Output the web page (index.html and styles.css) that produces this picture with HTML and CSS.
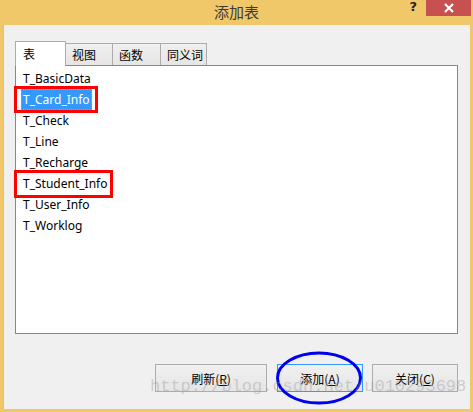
FILE: index.html
```html
<!DOCTYPE html>
<html>
<head>
<meta charset="utf-8">
<link rel="stylesheet" href="styles.css">
</head>
<body>
<div class="window">
  <div class="titlebar">
    <div></div>
    <div class="title">添加表</div>
    <div class="caption-btns">
      <span class="help">?</span>
      <span class="close">
        <svg width="12" height="10" viewBox="0 0 12 10"><path d="M2 1 L10 9 M10 1 L2 9" stroke="#fff" stroke-width="2.2" fill="none"/></svg>
      </span>
    </div>
  </div>
  <div class="client">
    <div class="tabs">
      <div class="tab active">表</div>
      <div class="tab">视图</div>
      <div class="tab">函数</div>
      <div class="tab">同义词</div>
    </div>
    <div class="panel">
      <div class="item"><span class="txt">T_BasicData</span></div>
      <div class="item"><span class="txt sel">T_Card_Info</span><span class="mark m1"></span></div>
      <div class="item"><span class="txt">T_Check</span></div>
      <div class="item"><span class="txt">T_Line</span></div>
      <div class="item"><span class="txt">T_Recharge</span></div>
      <div class="item"><span class="txt">T_Student_Info</span><span class="mark m2"></span></div>
      <div class="item"><span class="txt">T_User_Info</span></div>
      <div class="item"><span class="txt">T_Worklog</span></div>
    </div>
    <div class="buttons">
      <button class="btn wide">刷新(<u>R</u>)</button>
      <button class="btn default">添加(<u>A</u>)<svg class="circle" width="90" height="56" viewBox="0 0 90 56"><ellipse cx="45" cy="28" rx="41.5" ry="25" fill="none" stroke="#0000ee" stroke-width="3"/></svg></button>
      <button class="btn">关闭(<u>C</u>)</button>
    </div>
  </div>
  <div class="watermark">http://blog.csdn.net/u010293698</div>
</div>
</body>
</html>
```
FILE: styles.css
```css
* { box-sizing: border-box; }
html, body { margin: 0; padding: 0; }
body {
  width: 473px;
  height: 412px;
  overflow: hidden;
  font-family: "Noto Sans", "Noto Sans CJK SC", sans-serif;
}
.window {
  position: relative;
  width: 473px;
  height: 412px;
  background: #f0c86a;
  display: flex;
  flex-direction: column;
}
.titlebar {
  height: 25px;
  display: grid;
  grid-template-columns: 1fr auto 1fr;
  align-items: start;
}
.title {
  font-family: "Noto Sans CJK SC", sans-serif;
  font-size: 15px;
  line-height: 24px;
  color: #3a3a3a;
}
.caption-btns {
  display: flex;
  justify-content: flex-end;
  align-items: flex-start;
  padding-right: 2px;
}
.help {
  font-family: "DejaVu Sans", sans-serif;
  font-weight: bold;
  font-size: 13px;
  line-height: 14px;
  color: #222;
  margin-right: 9px;
}
.close {
  width: 45px;
  height: 16px;
  background: #c75050;
  display: flex;
  align-items: center;
  justify-content: center;
}
.close svg { display: block; }
.client {
  flex: 1;
  margin: 0 3px 3px 3px;
  background: #f0f0f0;
  border-left: 1px solid #e2c27a;
  padding: 16px 12px 17px 11px;
  display: flex;
  flex-direction: column;
}
.tabs {
  display: flex;
  align-items: flex-end;
  height: 24px;
  font-family: "Noto Sans CJK SC", sans-serif;
  font-size: 12px;
  position: relative;
  z-index: 1;
}
.tab {
  height: 22px;
  border: 1px solid #acacac;
  border-bottom: none;
  background: linear-gradient(#f0f0f0, #e5e5e5);
  color: #000;
  padding: 2px 0 0 6px;
  line-height: 17px;
  width: 48px;
  margin-left: -1px;
}
.tab:nth-child(3) { width: 49px; }
.tab:nth-child(4) { width: 47px; }
.tab.active {
  height: 25px;
  width: 51px;
  margin-left: 0;
  margin-bottom: -1px;
  background: #fff;
  padding: 3px 0 0 7px;
  z-index: 2;
}
.panel {
  height: 269px;
  background: #fff;
  border: 1px solid #828790;
  padding: 2px 5px;
  display: flex;
  flex-direction: column;
  align-items: flex-start;
}
.item {
  position: relative;
  height: 21px;
  display: flex;
  align-items: center;
}
.txt {
  font-size: 12px;
  line-height: 21px;
  padding: 0 2px;
  color: #000;
}
.txt.sel {
  background: #3399ff;
  color: #fff;
  outline: 1px dotted #c0a060;
  outline-offset: -1px;
}
.mark {
  position: absolute;
  border: 3px solid #ff0000;
}
.m1 { left: -7px; right: -6px; top: -3px; bottom: -3px; }
.m2 { left: -7px; right: -4px; top: -3px; bottom: -4px; }
.buttons {
  margin-top: auto;
  display: flex;
  justify-content: flex-end;
  gap: 9px;
}
.btn {
  position: relative;
  height: 28px;
  width: 86px;
  border: 1px solid #acacac;
  background: linear-gradient(#f0f0f0, #e5e5e5);
  font-family: "Noto Sans CJK SC", sans-serif;
  font-size: 12px;
  color: #000;
  padding: 0;
}
.btn.wide { width: 112px; margin-right: 1px; }
.btn.default { border-color: #3399ff; }
.btn u { text-decoration: underline; }
.circle {
  position: absolute;
  left: -4px;
  top: -15px;
  pointer-events: none;
}
.watermark {
  position: absolute;
  left: 150px;
  top: 377px;
  font-family: "Liberation Mono", monospace;
  font-size: 17px;
  color: rgba(150, 150, 150, 0.4);
  white-space: nowrap;
}
```
